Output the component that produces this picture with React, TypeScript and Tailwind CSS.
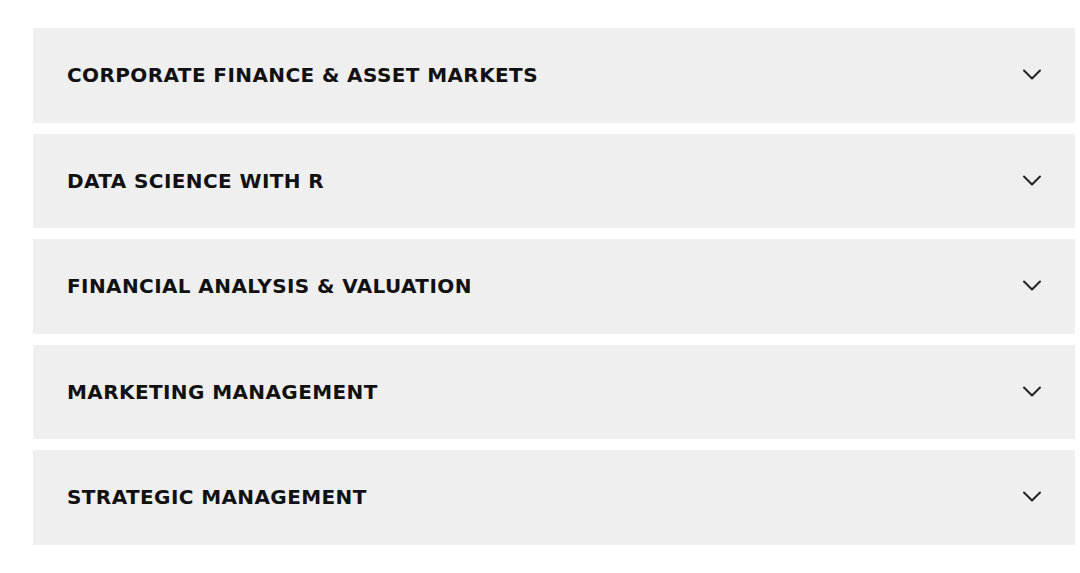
const courses = [
  "CORPORATE FINANCE & ASSET MARKETS",
  "DATA SCIENCE WITH R",
  "FINANCIAL ANALYSIS & VALUATION",
  "MARKETING MANAGEMENT",
  "STRATEGIC MANAGEMENT",
]

function Chevron() {
  return (
    <svg width="20" height="12" viewBox="0 0 20 12" fill="none" className="shrink-0">
      <polyline points="2,1.5 10,9.5 18,1.5" stroke="#222" strokeWidth="2" strokeLinecap="round" strokeLinejoin="round" />
    </svg>
  )
}

export default function App() {
  return (
    <div className="min-h-screen bg-white pt-[28px] pl-[33px] pr-[5px]" style={{ fontFamily: '"DejaVu Sans", sans-serif' }}>
      <div className="flex flex-col gap-[11px]">
        {courses.map((c) => (
          <button
            key={c}
            className="flex h-[94.5px] w-full items-center justify-between bg-[#efefef] pl-[34px] pr-[33px] text-left"
          >
            <span className="text-[20px] font-bold tracking-[0.4px] text-[#111]">{c}</span>
            <Chevron />
          </button>
        ))}
      </div>
    </div>
  )
}
